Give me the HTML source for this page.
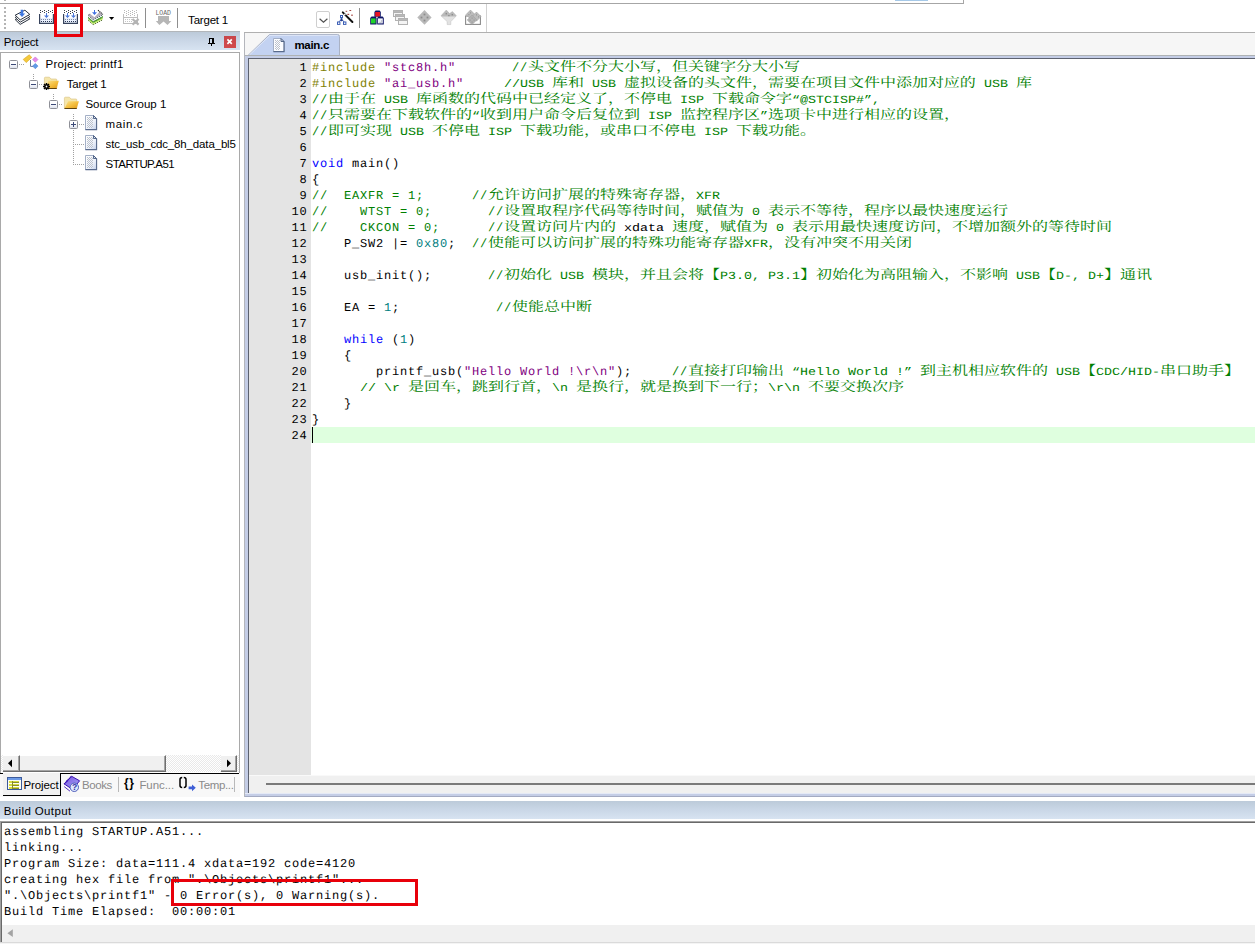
<!DOCTYPE html>
<html lang="zh-CN"><head><meta charset="utf-8"><title>printf1 - uVision</title>
<style>
html,body{margin:0;padding:0}
body{width:1255px;height:944px;overflow:hidden;background:#fff;position:relative;font-family:"Liberation Sans","Noto Sans CJK SC",sans-serif;font-size:12px;color:#000}
.a{position:absolute}
.ui{position:absolute;white-space:nowrap;font-size:11.5px;line-height:14px;color:#000}
svg{position:absolute;overflow:visible}
/* tree */
.tr{position:absolute;white-space:nowrap;font-size:11.5px;line-height:20px;height:20px}
.box{position:absolute;width:7px;height:7px;border:1px solid #8e9097;background:linear-gradient(#fff 40%,#dfe3ee);border-radius:1.5px}
.box i{position:absolute;left:1px;top:3px;width:5px;height:1px;background:#3c4a78}
.box b{position:absolute;left:3px;top:1px;width:1px;height:5px;background:#3c4a78}
.doth{position:absolute;height:1px;background-image:linear-gradient(90deg,#a0a0a0 50%,transparent 50%);background-size:2px 1px}
.dotv{position:absolute;width:1px;background-image:linear-gradient(180deg,#a0a0a0 50%,transparent 50%);background-size:1px 2px}
/* code */
.ln{position:absolute;left:249px;width:58.5px;text-align:right;height:16px;line-height:16px;font-family:"Liberation Mono",monospace;font-size:12px;letter-spacing:.8px;text-rendering:geometricPrecision;color:#000;white-space:pre}
.cl{position:absolute;left:312px;height:16px;line-height:16px;font-family:"Liberation Mono","Noto Serif CJK SC",monospace;font-size:12px;letter-spacing:.8px;text-rendering:geometricPrecision;color:#000;white-space:pre}
.cl .z{display:inline-block;font-family:"Noto Serif CJK SC","Noto Sans CJK SC",serif;font-size:13.333px;font-weight:400;line-height:10px;letter-spacing:0;transform:scaleX(1.2);transform-origin:0 0;white-space:pre}
.cl .s{display:inline-block;font-size:11px;letter-spacing:0;line-height:10px;transform:scaleX(1.2121);transform-origin:0 0;white-space:pre}
.c{color:#008000}.p{color:#808000}.k{color:#0000ff}.n{color:#008080}.q{color:#800080}
.out{position:absolute;left:4px;height:16px;line-height:16px;font-family:"Liberation Mono",monospace;font-size:12px;letter-spacing:.8px;text-rendering:geometricPrecision;color:#000;white-space:pre}
</style></head><body>
<!-- ===== top strip ===== -->
<div class="a" style="left:0;top:3px;width:964px;height:1px;background:#a6a6a6"></div>
<div class="a" style="left:963px;top:0;width:1px;height:4px;background:#a6a6a6"></div>
<div class="a" style="left:895px;top:0;width:33px;height:1px;background:#a6c9e8"></div>
<!-- ===== toolbar ===== -->
<div class="a" id="toolbar" style="left:0;top:4px;width:1255px;height:27px;background:#fff"></div>
<div class="a" style="left:486px;top:4px;width:1px;height:28px;background:#d2d2d2"></div>
<!-- gripper -->
<svg style="left:0;top:0" width="12" height="32" shape-rendering="crispEdges">
<g fill="#b4b4b4"><rect x="4" y="0" width="2" height="1"/><rect x="4" y="7" width="2" height="2"/><rect x="4" y="11" width="2" height="2"/><rect x="4" y="15" width="2" height="2"/><rect x="4" y="19" width="2" height="2"/><rect x="4" y="23" width="2" height="2"/><rect x="4" y="27" width="2" height="2"/></g>
</svg>
<!-- icon 1 : translate -->
<svg style="left:14px;top:9px" width="17" height="17" viewBox="14 9 17 17">
<g fill="#fff" stroke="#2b3340" stroke-width="1" stroke-linejoin="round">
<path d="M15.2 19.6 L20.2 24.4 L29.8 18.9 L24.9 14.5 Z"/>
<path d="M15.2 17.4 L20.2 22.2 L29.8 16.7 L24.9 12.3 Z"/>
<path d="M15.2 15.2 L20.2 19.9 L29.8 14.4 L24.9 10.2 Z"/>
</g>
<path d="M20.7 9.8 H23.2 V13.4 H25.2 L22 16.9 L18.8 13.4 H20.7 Z" fill="#3f78e0"/>
</svg>
<!-- icon 2 : build -->
<svg style="left:38px;top:9px" width="17" height="17" viewBox="38 9 17 17" shape-rendering="crispEdges">
<rect x="40" y="18" width="13" height="5" fill="#e9f0fd"/>
<g fill="#3a3f4a"><rect x="40" y="10" width="1" height="1"/><rect x="44" y="10" width="1" height="1"/><rect x="48" y="10" width="1" height="1"/><rect x="52" y="10" width="1" height="1"/>
<rect x="42" y="11" width="1" height="1"/><rect x="46" y="11" width="1" height="1"/><rect x="50" y="11" width="1" height="1"/>
<rect x="40" y="12" width="1" height="1"/><rect x="44" y="12" width="1" height="1"/><rect x="48" y="12" width="1" height="1"/><rect x="52" y="12" width="1" height="1"/></g>
<path d="M39.6 14 V23.4 H53.4 V14" fill="none" stroke="#37435c" stroke-width="1.2" shape-rendering="auto"/>
<g fill="#7e8aa6"><rect x="41" y="19" width="1" height="1"/><rect x="43" y="19" width="1" height="1"/><rect x="45" y="19" width="1" height="1"/><rect x="47" y="19" width="1" height="1"/><rect x="49" y="19" width="1" height="1"/><rect x="51" y="19" width="1" height="1"/></g>
<g fill="#2a3654"><rect x="41" y="21" width="1" height="1"/><rect x="43" y="21" width="1" height="1"/><rect x="45" y="21" width="1" height="1"/><rect x="47" y="21" width="1" height="1"/><rect x="49" y="21" width="1" height="1"/><rect x="51" y="21" width="1" height="1"/></g>
<path d="M46 13 H47 V15.4 H49 L46.5 18 L44 15.4 H46 Z" fill="#4c79d9" shape-rendering="auto"/>
</svg>
<!-- icon 3 : rebuild -->
<svg style="left:62px;top:9px" width="17" height="17" viewBox="62 9 17 17" shape-rendering="crispEdges">
<rect x="64" y="18" width="13" height="5" fill="#e9f0fd"/>
<g fill="#3a3f4a"><rect x="64" y="10" width="1" height="1"/><rect x="68" y="10" width="1" height="1"/><rect x="72" y="10" width="1" height="1"/><rect x="76" y="10" width="1" height="1"/>
<rect x="66" y="11" width="1" height="1"/><rect x="70" y="11" width="1" height="1"/><rect x="74" y="11" width="1" height="1"/>
<rect x="64" y="12" width="1" height="1"/><rect x="68" y="12" width="1" height="1"/><rect x="72" y="12" width="1" height="1"/><rect x="76" y="12" width="1" height="1"/><rect x="70" y="13" width="1" height="1"/></g>
<path d="M63.6 14 V23.4 H77.4 V14" fill="none" stroke="#37435c" stroke-width="1.2" shape-rendering="auto"/>
<g fill="#7e8aa6"><rect x="65" y="19" width="1" height="1"/><rect x="67" y="19" width="1" height="1"/><rect x="69" y="19" width="1" height="1"/><rect x="71" y="19" width="1" height="1"/><rect x="73" y="19" width="1" height="1"/><rect x="75" y="19" width="1" height="1"/></g>
<g fill="#2a3654"><rect x="65" y="21" width="1" height="1"/><rect x="67" y="21" width="1" height="1"/><rect x="69" y="21" width="1" height="1"/><rect x="71" y="21" width="1" height="1"/><rect x="73" y="21" width="1" height="1"/><rect x="75" y="21" width="1" height="1"/></g>
<path d="M67 13 H68 V15.4 H70 L67.5 18 L65 15.4 H67 Z" fill="#4c79d9" shape-rendering="auto"/>
<path d="M73 13 H74 V15.4 H76 L73.5 18 L71 15.4 H73 Z" fill="#4c79d9" shape-rendering="auto"/>
</svg>
<!-- red annotation box -->
<div class="a" style="left:54px;top:4px;width:23px;height:27px;border:3px solid #e8000a;z-index:20"></div>
<!-- icon 4 : batch build -->
<svg style="left:87px;top:9px" width="17" height="17" viewBox="87 9 17 17">
<path d="M88.2 20.32 L93.2 24.72 L102.8 19.62" fill="none" stroke="#33520f" stroke-width="1" stroke-dasharray="1.3 .9"/>
<path d="M88.2 19.50 L93.2 23.90 L102.8 18.80" fill="none" stroke="#cff07c" stroke-width="1"/>
<path d="M88.2 18.68 L93.2 23.08 L102.8 17.98" fill="none" stroke="#9fdb48" stroke-width="1"/>
<path d="M88.2 17.86 L93.2 22.26 L102.8 17.16" fill="none" stroke="#4f9e26" stroke-width="1"/>
<path d="M88.2 17.04 L93.2 21.44 L102.8 16.34" fill="none" stroke="#2c7a22" stroke-width="1"/>
<path d="M88.2 16.22 L93.2 20.62 L102.8 15.52" fill="none" stroke="#ffffff" stroke-width="1"/>
<path d="M88.2 15.40 L93.2 19.80 L102.8 14.70" fill="none" stroke="#1f4a46" stroke-width="1" stroke-dasharray="1.3 .9"/>
<path d="M88 15.2 L90.2 14 L94.5 17.3 L99.6 11.8 L102.8 14.4 L93.3 19.4 Z" fill="#b5afbd"/>
<path d="M88 15.2 L90.2 14" stroke="#7d7886" stroke-width=".9"/>
<path d="M98 10.2 L102.9 14.4" stroke="#222" stroke-width="1.1" stroke-dasharray="1.2 .7"/>
<path d="M94 10 H95 V12.2 H97 L94.5 15 L92 12.2 H94 Z" fill="#3f6fe0"/>
</svg>
<svg style="left:108px;top:16px" width="8" height="5" viewBox="108 16 8 5"><path d="M109 17 H114.2 L111.6 20 Z" fill="#000"/></svg>
<!-- icon 5 : stop build (disabled) -->
<svg style="left:122px;top:9px" width="18" height="17" viewBox="122 9 18 17" shape-rendering="crispEdges">
<g fill="#b8b8b8"><rect x="124" y="10" width="1" height="1"/><rect x="128" y="10" width="1" height="1"/><rect x="132" y="10" width="1" height="1"/><rect x="136" y="10" width="1" height="1"/>
<rect x="126" y="11" width="1" height="1"/><rect x="130" y="11" width="1" height="1"/><rect x="134" y="11" width="1" height="1"/>
<rect x="124" y="12" width="1" height="1"/><rect x="128" y="12" width="1" height="1"/><rect x="132" y="12" width="1" height="1"/><rect x="136" y="12" width="1" height="1"/>
<rect x="126" y="13" width="1" height="1"/><rect x="130" y="13" width="1" height="1"/><rect x="134" y="13" width="1" height="1"/>
<rect x="128" y="14" width="1" height="1"/><rect x="132" y="14" width="1" height="1"/>
<rect x="126" y="15" width="1" height="1"/><rect x="130" y="15" width="1" height="1"/><rect x="134" y="15" width="1" height="1"/></g>
<path d="M123 14 V24 H138 V14 H137 V17 H124 V14 Z M124 18 V23 H137 V18 Z" fill="#bdbdbd" fill-rule="evenodd"/>
<g fill="#c6c6c6"><rect x="125" y="19" width="1" height="1"/><rect x="127" y="19" width="1" height="1"/><rect x="129" y="19" width="1" height="1"/><rect x="131" y="19" width="1" height="1"/>
<rect x="125" y="21" width="1" height="1"/><rect x="127" y="21" width="1" height="1"/><rect x="129" y="21" width="1" height="1"/><rect x="131" y="21" width="1" height="1"/></g>
<path d="M132.5 19 L138.6 24.6 M138.6 19 L132.5 24.6" stroke="#b4b4b4" stroke-width="2.2" shape-rendering="auto"/>
</svg>
<div class="a" style="left:145px;top:8px;width:1px;height:20px;background:#8e8e8e"></div>
<!-- icon 6 : LOAD (disabled) -->
<svg style="left:155px;top:9px" width="18" height="17" viewBox="155 9 18 17">
<text x="155.4" y="14.8" font-family="Liberation Mono,monospace" font-size="6.8" fill="#686868" textLength="15.6" lengthAdjust="spacingAndGlyphs">LOAD</text>
<path d="M158 16 H169 V21 H171.4 L167.5 25 L163.6 21.6 L159.4 25 L155.8 21 H158 Z" fill="#b6b6b6"/>
</svg>
<div class="a" style="left:177px;top:8px;width:1px;height:20px;background:#8e8e8e"></div>
<!-- target combo -->
<div class="ui" id="tgt" style="left:188.1px;letter-spacing:-0.2px;top:13px">Target 1</div>
<div class="a" style="left:316px;top:11px;width:12px;height:15px;border:1px solid #cfcfcf;border-radius:2px;background:#fff"></div>
<svg style="left:318.5px;top:18.3px" width="9" height="6" viewBox="0 0 9 6"><path d="M0.6 0.8 L4.5 4.3 L8.4 0.8" fill="none" stroke="#505050" stroke-width="1.2"/></svg>
<!-- icon 7 : options wand -->
<svg style="left:336px;top:9px" width="18" height="17" viewBox="336 9 18 17">
<g fill="none" stroke="#3a5db4" stroke-width="1"><path d="M341.5 17.5 V20 M338.5 22 L341.5 19.6 L344.5 22"/></g>
<g fill="#fff" stroke="#3a5db4" stroke-width="1"><rect x="340.5" y="15.5" width="2" height="2.4"/><rect x="337.5" y="22" width="2.4" height="2.4"/><rect x="343.5" y="22" width="2.4" height="2.4"/></g>
<path d="M341.5 18.4 L343 20 L341.5 21.6 L340 20 Z" fill="#2a3f8c"/>
<path d="M342.8 12.4 L352.4 22" stroke="#111" stroke-width="2" stroke-linecap="round"/>
<path d="M344.2 13.8 L345.4 15" stroke="#fff" stroke-width="1.2"/>
<g fill="#a3453f"><rect x="345.6" y="10.8" width="1.6" height="1"/><rect x="349.4" y="10" width="1.8" height="1"/><rect x="347.4" y="13.8" width="1.8" height="1.2"/><rect x="351.2" y="14.6" width="1.6" height="1.2"/></g>
</svg>
<div class="a" style="left:359px;top:8px;width:1px;height:20px;background:#8e8e8e"></div>
<!-- icon 8 : manage components (cubes) -->
<svg style="left:369px;top:9px" width="17" height="17" viewBox="369 9 17 17">
<path d="M374.4 12 L375.6 10.4 H379.6 L380.8 12 V16.8 H374.4 Z" fill="#0e1466"/>
<rect x="375.2" y="12" width="4.8" height="4.6" fill="#e61224"/>
<path d="M370.2 18 L371.6 16.6 H375.6 L376.6 18 V24.4 H370.2 Z" fill="#0e1466"/>
<rect x="371" y="18.4" width="4.6" height="5" fill="#1fd32a"/>
<path d="M377.2 18 L378.4 16.6 H382.6 L383.8 18 V24.4 H377.2 Z" fill="#0e1466"/>
<rect x="378" y="18.4" width="4.8" height="5" fill="#f1f3f8"/>
<path d="M379.4 22.4 H381.6 V20" stroke="#b8bcc8" stroke-width=".9" fill="none"/>
</svg>
<!-- icon 9 : windows (disabled) -->
<svg style="left:393px;top:9px" width="17" height="17" viewBox="393 9 17 17" shape-rendering="crispEdges">
<g fill="#f4f4f4" stroke="#b2b2b2" stroke-width="1">
<rect x="393.5" y="10.5" width="9" height="6"/><rect x="393.5" y="10.5" width="9" height="1.6" fill="#b8b8b8"/>
<rect x="395.5" y="14.5" width="9" height="6"/><rect x="395.5" y="14.5" width="9" height="1.6" fill="#b8b8b8"/>
<rect x="398.5" y="18.5" width="9" height="6"/><rect x="398.5" y="18.5" width="9" height="1.6" fill="#b8b8b8"/>
</g></svg>
<!-- icon 10 : diamond (disabled) -->
<svg style="left:417px;top:9px" width="16" height="17" viewBox="417 9 16 17">
<path d="M424.5 10 L431.6 17.4 L424.5 24.8 L417.3 17.4 Z" fill="#b9b9b9"/>
<g fill="#8c8c8c"><rect x="423.6" y="13.6" width="1.8" height="1.8"/><rect x="420.6" y="16.6" width="1.8" height="1.8"/><rect x="426.6" y="16.6" width="1.8" height="1.8"/><rect x="423.6" y="19.6" width="1.8" height="1.8"/></g>
</svg>
<!-- icon 11 : funnel (disabled) -->
<svg style="left:440px;top:9px" width="18" height="17" viewBox="440 9 18 17">
<path d="M441 15.8 L446.3 10 L449.6 13.6 L452.4 11.6 L456.4 15.8 L450.8 21.6 V24.6 H447.2 V21.6 Z" fill="#e2e2e2" stroke="#c4c4c4" stroke-width=".6"/>
<path d="M441 15.8 L446.3 10 L449.6 13.6 L452.4 11.6 L456.4 15.8 L455.6 16.6 H441.8 Z" fill="#b9b9b9"/>
<g fill="#8c8c8c"><rect x="445.6" y="13" width="1.4" height="1.4"/><rect x="451.6" y="14" width="1.4" height="1.4"/><rect x="448.2" y="15" width="1.4" height="1.2"/></g>
</svg>
<!-- icon 12 : pack installer (disabled) -->
<svg style="left:464px;top:9px" width="18" height="17" viewBox="464 9 18 17">
<rect x="465.6" y="16" width="14.8" height="8.4" fill="#fff" stroke="#8a8a8a" stroke-width="1.1"/>
<path d="M470.5 10 L475 14.6 L470.5 19.2 L466 14.6 Z" fill="#bcbcbc" stroke="#9a9a9a" stroke-width=".5"/>
<path d="M476.5 12 L481 16.6 L476.5 21.2 L472 16.6 Z" fill="#bcbcbc" stroke="#9a9a9a" stroke-width=".5"/>
<path d="M472 15.2 L476.8 20 L472 24.6 L467.2 20 Z" fill="#b4b4b4" stroke="#969696" stroke-width=".5"/>
<g fill="#8f8f8f"><rect x="470" y="12.4" width="1" height="1"/><rect x="468.4" y="14.2" width="1" height="1"/><rect x="476" y="14.4" width="1" height="1"/><rect x="478" y="16.4" width="1" height="1"/><rect x="471.6" y="17.6" width="1" height="1"/><rect x="469.6" y="19.6" width="1" height="1"/><rect x="473.6" y="19.6" width="1" height="1"/><rect x="471.6" y="21.6" width="1" height="1"/></g>
</svg>
<!-- ===== project panel ===== -->
<div class="a" style="left:0;top:31px;width:240px;height:19px;background:linear-gradient(#bccad9,#c9d6e6 45%,#d7e3f1);border-top:1px solid #b2b6ba;box-sizing:border-box"></div>
<div class="ui" id="ph" style="left:3.8px;letter-spacing:-0.18px;top:35px">Project</div>
<!-- pin -->
<svg style="left:207px;top:37px" width="10" height="10" viewBox="207 37 10 10" shape-rendering="crispEdges">
<path d="M209 38 H214 V43 H215 V44 H212 V46 H211 V44 H208 V43 H209 Z M210 39 V43 H212 V39 Z" fill="#000" fill-rule="evenodd"/>
</svg>
<div class="a" style="left:224px;top:36px;width:12px;height:12px;background:linear-gradient(#c8464a,#d24a4c)"></div>
<svg style="left:226px;top:38px" width="8" height="8" viewBox="226 38 8 8"><path d="M227.4 39.4 L231.8 43.8 M231.8 39.4 L227.4 43.8" stroke="#fff" stroke-width="1.7"/></svg>
<!-- tree frame -->
<div class="a" style="left:0;top:52px;width:239px;height:721px;border:1px solid #a9a9a9;border-bottom:none;background:#fff;box-sizing:content-box;width:238px"></div>
<!-- tree lines -->
<div class="doth" style="left:19px;top:64px;width:6px"></div>
<div class="dotv" style="left:33px;top:74px;height:6px"></div>
<div class="doth" style="left:39px;top:84px;width:4px"></div>
<div class="dotv" style="left:53px;top:94px;height:6px"></div>
<div class="doth" style="left:59px;top:104px;width:4px"></div>
<div class="dotv" style="left:73px;top:114px;height:51px"></div>
<div class="doth" style="left:79px;top:124px;width:6px"></div>
<div class="doth" style="left:73px;top:144px;width:12px"></div>
<div class="doth" style="left:73px;top:164px;width:12px"></div>
<!-- expanders -->
<div class="box" style="left:9px;top:60px"><i></i></div>
<div class="box" style="left:29px;top:80px"><i></i></div>
<div class="box" style="left:49px;top:100px"><i></i></div>
<div class="box" style="left:69px;top:120px"><i></i><b></b></div>
<!-- project icon -->
<svg style="left:23px;top:54px" width="16" height="16" viewBox="23 54 16 16">
<path d="M30.5 60 V66.4 H33.4" fill="none" stroke="#6a7c9c" stroke-width="1"/>
<path d="M23.2 59.4 L29.2 54.8 L31.8 57.4 L26.2 62.6 Z" fill="#f4c93c" stroke="#d9a51c" stroke-width=".6"/>
<path d="M35.3 56.9 L38 59.6 L35.3 62.3 L32.6 59.6 Z" fill="#e58be8" stroke="#c860cf" stroke-width=".5"/>
<path d="M35.3 63.4 L38 66.1 L35.3 68.8 L32.6 66.1 Z" fill="#5f9be8" stroke="#3c74c8" stroke-width=".5"/>
</svg>
<!-- folder icons -->
<svg style="left:43px;top:76px" width="17" height="15" viewBox="43 76 17 15">
<defs><linearGradient id="fo1" x1="0" y1="0" x2="1" y2="1"><stop offset="0" stop-color="#fbe48e"/><stop offset=".55" stop-color="#f4bd3c"/><stop offset="1" stop-color="#e09a1c"/></linearGradient></defs>
<path d="M44.4 88 V78.2 Q44.4 77.2 45.4 77.2 H49.4 L51 79 H56 Q56.8 79 56.8 80 V88 Z" fill="#f5e6ac" stroke="#d6c07c" stroke-width=".6"/>
<path d="M48.4 80.8 H58.8 L56.6 88.4 H46 Z" fill="url(#fo1)"/>
<path d="M45.6 88.5 H56.8" stroke="#5c420f" stroke-width="1"/>
<g stroke="#000" stroke-width="1.5"><path d="M46.5 83 V90 M43 86.5 H50 M44 84 L49 89 M49 84 L44 89"/></g>
<circle cx="46.5" cy="86.5" r="1.9" fill="#000"/><circle cx="46.5" cy="86.5" r=".9" fill="#fff"/>
</svg>
<svg style="left:63px;top:96px" width="17" height="15" viewBox="43 76 17 15">
<defs><linearGradient id="fo2" x1="0" y1="0" x2="1" y2="1"><stop offset="0" stop-color="#fbe48e"/><stop offset=".55" stop-color="#f4bd3c"/><stop offset="1" stop-color="#e09a1c"/></linearGradient></defs>
<path d="M44.4 88 V78.2 Q44.4 77.2 45.4 77.2 H49.4 L51 79 H56 Q56.8 79 56.8 80 V88 Z" fill="#f5e6ac" stroke="#d6c07c" stroke-width=".6"/>
<path d="M48.2 81.2 H58.9 L56.7 88.4 H44.6 Z" fill="url(#fo2)"/>
<path d="M44.4 88.5 H56.8" stroke="#5c420f" stroke-width="1"/>
</svg>
<!-- file icons -->
<svg style="left:85px;top:115px" width="13" height="16" viewBox="0 0 13 16">
<defs><pattern id="dp0" width="2" height="2" patternUnits="userSpaceOnUse"><rect x="0" y="0" width="1" height="1" fill="#bcc2cc"/><rect x="1" y="1" width="1" height="1" fill="#bcc2cc"/></pattern>
<linearGradient id="fg0" x1="0" y1="0" x2="1" y2="1"><stop offset="0" stop-color="#ffffff"/><stop offset=".6" stop-color="#eef2fa"/><stop offset="1" stop-color="#c3d0ea"/></linearGradient></defs>
<path d="M0.5 0.5 H8.5 L11.5 3.5 V14.5 H0.5 Z" fill="url(#fg0)" stroke="#a3afc6" stroke-width="1"/>
<path d="M0.4 14.6 H11.6 V3.6" fill="none" stroke="#586a8c" stroke-width="1.1"/>
<path d="M8.5 0.5 V3.5 H11.5 Z" fill="#dfe6f3" stroke="#44587c" stroke-width=".9"/>
<rect x="2" y="2" width="6" height="11" fill="url(#dp0)"/>
</svg>
<svg style="left:85px;top:135px" width="13" height="16" viewBox="0 0 13 16">
<defs><pattern id="dp1" width="2" height="2" patternUnits="userSpaceOnUse"><rect x="0" y="0" width="1" height="1" fill="#bcc2cc"/><rect x="1" y="1" width="1" height="1" fill="#bcc2cc"/></pattern>
<linearGradient id="fg1" x1="0" y1="0" x2="1" y2="1"><stop offset="0" stop-color="#ffffff"/><stop offset=".6" stop-color="#eef2fa"/><stop offset="1" stop-color="#c3d0ea"/></linearGradient></defs>
<path d="M0.5 0.5 H8.5 L11.5 3.5 V14.5 H0.5 Z" fill="url(#fg1)" stroke="#a3afc6" stroke-width="1"/>
<path d="M0.4 14.6 H11.6 V3.6" fill="none" stroke="#586a8c" stroke-width="1.1"/>
<path d="M8.5 0.5 V3.5 H11.5 Z" fill="#dfe6f3" stroke="#44587c" stroke-width=".9"/>
<rect x="2" y="2" width="6" height="11" fill="url(#dp1)"/>
</svg>
<svg style="left:85px;top:155px" width="13" height="16" viewBox="0 0 13 16">
<defs><pattern id="dp2" width="2" height="2" patternUnits="userSpaceOnUse"><rect x="0" y="0" width="1" height="1" fill="#bcc2cc"/><rect x="1" y="1" width="1" height="1" fill="#bcc2cc"/></pattern>
<linearGradient id="fg2" x1="0" y1="0" x2="1" y2="1"><stop offset="0" stop-color="#ffffff"/><stop offset=".6" stop-color="#eef2fa"/><stop offset="1" stop-color="#c3d0ea"/></linearGradient></defs>
<path d="M0.5 0.5 H8.5 L11.5 3.5 V14.5 H0.5 Z" fill="url(#fg2)" stroke="#a3afc6" stroke-width="1"/>
<path d="M0.4 14.6 H11.6 V3.6" fill="none" stroke="#586a8c" stroke-width="1.1"/>
<path d="M8.5 0.5 V3.5 H11.5 Z" fill="#dfe6f3" stroke="#44587c" stroke-width=".9"/>
<rect x="2" y="2" width="6" height="11" fill="url(#dp2)"/>
</svg>
<!-- tree labels -->
<div class="tr" id="trA" style="left:45.6px;letter-spacing:0.24px;top:54px">Project: printf1</div>
<div class="tr" id="trB" style="left:66.8px;letter-spacing:-0.26px;top:74px">Target 1</div>
<div class="tr" id="trC" style="left:85.4px;letter-spacing:-0.02px;top:94px">Source Group 1</div>
<div class="tr" id="trD" style="left:105.6px;letter-spacing:0.6px;top:114px">main.c</div>
<div class="tr" id="trE" style="left:105.6px;letter-spacing:-0.15px;top:134px;width:130.3px;overflow:hidden">stc_usb_cdc_8h_data_bl5</div>
<div class="tr" id="trF" style="left:105.6px;letter-spacing:-0.57px;top:154px">STARTUP.A51</div>
<!-- project h-scrollbar -->
<div class="a" style="left:1px;top:755px;width:238px;height:17px;background-color:#fff;background-image:linear-gradient(45deg,#e9e9e9 25%,transparent 25%,transparent 75%,#e9e9e9 75%),linear-gradient(45deg,#e9e9e9 25%,transparent 25%,transparent 75%,#e9e9e9 75%);background-size:2px 2px;background-position:0 0,1px 1px"></div>
<div class="a" style="left:3px;top:755px;width:15px;height:15px;background:#f0f0f0;border-right:1px solid #6e6e6e;border-bottom:1px solid #6e6e6e;border-top:1px solid #fff;box-shadow:inset -1px -1px 0 #a4a4a4;padding:0 1px 1px 0;box-sizing:content-box;height:14px"></div>
<svg style="left:7px;top:759px" width="6" height="9" viewBox="0 0 6 9"><path d="M5 0.4 V8.2 L1 4.3 Z" fill="#000"/></svg>
<div class="a" style="left:20px;top:755px;width:144px;height:14px;background:#f0f0f0;border-right:1px solid #6e6e6e;border-bottom:1px solid #6e6e6e;border-top:1px solid #fff;box-shadow:inset -1px -1px 0 #a4a4a4;padding:0 1px 1px 0"></div>
<div class="a" style="left:221px;top:755px;width:14px;height:14px;background:#f0f0f0;border-right:1px solid #6e6e6e;border-bottom:1px solid #6e6e6e;border-top:1px solid #fff;box-shadow:inset -1px -1px 0 #a4a4a4;padding:0 1px 1px 0"></div>
<svg style="left:226px;top:759px" width="6" height="9" viewBox="0 0 6 9"><path d="M1 0.4 V8.2 L5 4.3 Z" fill="#000"/></svg>
<!-- bottom tabs -->
<div class="a" style="left:0;top:773px;width:240px;height:24px;background:#f8f8f8"></div>
<div class="a" style="left:3px;top:773px;width:58px;height:22px;background:#f1f1f1;border-right:1px solid #000;border-bottom:1px solid #000;box-sizing:content-box;width:57px"></div>
<div class="a" style="left:0;top:773px;width:3px;height:1px;background:#000"></div>
<div class="a" style="left:60px;top:773px;width:179px;height:1px;background:#000"></div>
<!-- tab: Project -->
<svg style="left:7px;top:777px" width="15" height="13" viewBox="0 0 15 13" shape-rendering="crispEdges">
<rect x="0.5" y="0.5" width="14" height="12" fill="#fdfdf2" stroke="#3c5a9a"/>
<rect x="1" y="1" width="13" height="2" fill="#6c9ae6"/>
<g fill="#d8dc3c"><rect x="2" y="4" width="3" height="2"/><rect x="2" y="7" width="3" height="2"/><rect x="2" y="10" width="3" height="2"/><rect x="6" y="4" width="6" height="2"/><rect x="6" y="7" width="6" height="2"/><rect x="6" y="10" width="6" height="2"/></g>
<g fill="#8a8e2a"><rect x="5" y="4" width="1" height="8"/><rect x="6" y="5" width="6" height="1"/><rect x="6" y="8" width="6" height="1"/><rect x="6" y="11" width="6" height="1"/></g>
</svg>
<div class="ui" id="tabP" style="left:23.5px;letter-spacing:-0.12px;top:778px">Project</div>
<!-- tab: Books -->
<svg style="left:63px;top:775px" width="18" height="18" viewBox="63 775 18 18">
<defs><linearGradient id="bk" x1="0" y1="0" x2="1" y2="1"><stop offset="0" stop-color="#7a55e2"/><stop offset="1" stop-color="#a3a6f2"/></linearGradient></defs>
<path d="M64.2 784 L71.5 776.2 L79.6 780.8 L72.6 789.4 Z" fill="url(#bk)" stroke="#3d14b4" stroke-width="1"/>
<path d="M64.2 784 L71.5 776.2" stroke="#3d14b4" stroke-width="1.6" stroke-dasharray="1 .8"/>
<path d="M64.4 785.6 L70.4 790.4" stroke="#fff" stroke-width="1.2"/>
<path d="M64.2 786.6 L70 791.2" stroke="#3d14b4" stroke-width=".9"/>
<circle cx="74.3" cy="787.3" r="4.2" fill="#dde9fd" stroke="#4350b4" stroke-width=".9"/>
<text x="72.1" y="790.4" font-family="Liberation Sans,sans-serif" font-weight="bold" font-size="8.5" fill="#3636a6">?</text>
</svg>
<div class="ui" id="tabB" style="left:81.9px;letter-spacing:-0.38px;top:778px;color:#8a8a8a">Books</div>
<div class="a" style="left:118px;top:777px;width:1px;height:15px;background:#b9b9b9"></div>
<!-- tab: Functions -->
<div class="ui" style="left:124px;top:776px;font-weight:bold;font-size:12px;letter-spacing:0.5px">{}</div>
<div class="ui" id="tabF" style="left:139.4px;letter-spacing:-0.07px;top:778px;color:#8a8a8a">Func...</div>
<!-- tab: Templates -->
<svg style="left:179px;top:777px" width="16" height="14" viewBox="0 0 16 14">
<path d="M3.2 0.6 Q1 0.6 1 2.6 V8.4 Q1 10.4 3.2 10.4 M4.8 0.6 Q7 0.6 7 2.6 V8.4 Q7 10.4 4.8 10.4" fill="none" stroke="#000" stroke-width="1.5"/>
<path d="M9.6 9.4 H13 V7.4 L16.8 10.8 L13 14.2 V12.2 H9.6 Z" fill="#3f5fd6"/>
</svg>
<div class="ui" id="tabT" style="left:198.3px;letter-spacing:-0.35px;top:778px;color:#8a8a8a">Temp...</div>
<div class="a" style="left:234px;top:777px;width:1px;height:15px;background:#b9b9b9"></div>
<!-- ===== editor frame ===== -->
<div class="a" style="left:244px;top:32px;width:1011px;height:1px;background:#b0b0b0"></div>
<div class="a" style="left:244px;top:33px;width:1px;height:764px;background:#b4b6bc"></div>
<div class="a" style="left:245px;top:33px;width:1010px;height:22px;background:#f6f6f6"></div>
<!-- tab -->
<svg style="left:245px;top:33px" width="100" height="23" viewBox="245 33 100 23">
<path d="M248 55.5 L269.5 34.5 H337.5 Q339.5 34.5 339.5 36.5 V55.5 Z" fill="#c3d2f1" stroke="#aab2c4" stroke-width="1"/>
<path d="M249.4 55 L270 35.4 H337.6" fill="none" stroke="#dfe7f8" stroke-width="1"/>
</svg>
<svg style="left:273px;top:38px" width="13" height="15" viewBox="0 0 13 15">
<defs><pattern id="dpt" width="2" height="2" patternUnits="userSpaceOnUse"><rect x="0" y="0" width="1" height="1" fill="#bcc2cc"/><rect x="1" y="1" width="1" height="1" fill="#bcc2cc"/></pattern></defs>
<path d="M0.5 0.5 H8 L11 3.5 V13.5 H0.5 Z" fill="#fbfcff" stroke="#a3afc6" stroke-width="1"/>
<path d="M0.4 13.6 H11.1 V3.6" fill="none" stroke="#586a8c" stroke-width="1.1"/>
<path d="M8 0.5 V3.5 H11 Z" fill="#dfe6f3" stroke="#44587c" stroke-width=".9"/>
<rect x="2" y="2" width="5" height="10" fill="url(#dpt)"/>
</svg>
<div class="ui" id="tabm" style="left:294.4px;letter-spacing:-0.3px;top:38px;font-weight:bold">main.c</div>
<!-- frame bands -->
<div class="a" style="left:245px;top:55px;width:1010px;height:1px;background:#aeb2b4"></div>
<div class="a" style="left:245px;top:56px;width:1010px;height:741px;background:#c4cde6"></div>
<div class="a" style="left:248px;top:58px;width:1007px;height:735px;background:#5d6270"></div>
<div class="a" style="left:249px;top:59px;width:1006px;height:734px;background:#fff"></div>
<div class="a" style="left:245px;top:793px;width:1010px;height:1px;background:#e4e9f6"></div>
<div class="a" style="left:245px;top:796px;width:1010px;height:1px;background:#a3aac2"></div>
<!-- margin -->
<div class="a" style="left:249px;top:59px;width:62px;height:716px;background:#e4e4e4"></div>
<!-- current line -->
<div class="a" style="left:311px;top:427px;width:944px;height:16px;background:#dfffdf"></div>
<div class="a" style="left:312px;top:427px;width:1px;height:16px;background:#000"></div>
<!-- h scrollbar -->
<div class="a" style="left:249px;top:775px;width:1006px;height:1px;background:#f9f9f9"></div><div class="a" style="left:249px;top:776px;width:1006px;height:17px;background:#f0f0f0"></div>
<div class="a" style="left:266px;top:783px;width:989px;height:2px;background:#7a7a7a"></div>
<!-- ===== code ===== -->
<div class="ln" style="top:60px">1</div><div class="cl" style="top:60px"><span class="p">#include </span><span class="q">"stc8h.h"</span>       <span class="c">//<span class="z" style="width:272px">头文件不分大小写，但关键字分大小写</span></span></div>
<div class="ln" style="top:76px">2</div><div class="cl" style="top:76px"><span class="p">#include </span><span class="q">"ai_usb.h"</span>     <span class="c"><span class="s" style="width:48px">//USB </span><span class="z" style="width:32px">库和</span><span class="s" style="width:40px"> USB </span><span class="z" style="width:352px">虚拟设备的头文件，需要在项目文件中添加对应的</span><span class="s" style="width:40px"> USB </span><span class="z" style="width:16px">库</span></span></div>
<div class="ln" style="top:92px">3</div><div class="cl" style="top:92px"><span class="c">//<span class="z" style="width:48px">由于在</span><span class="s" style="width:40px"> USB </span><span class="z" style="width:256px">库函数的代码中已经定义了，不停电</span><span class="s" style="width:40px"> ISP </span><span class="z" style="width:80px">下载命令字</span><span class="s" style="width:88px">“@STCISP#”,</span></span></div>
<div class="ln" style="top:108px">4</div><div class="cl" style="top:108px"><span class="c">//<span class="z" style="width:144px">只需要在下载软件的</span><span class="s" style="width:8px">“</span><span class="z" style="width:160px">收到用户命令后复位到</span><span class="s" style="width:40px"> ISP </span><span class="z" style="width:80px">监控程序区</span><span class="s" style="width:8px">”</span><span class="z" style="width:192px">选项卡中进行相应的设置，</span></span></div>
<div class="ln" style="top:124px">5</div><div class="cl" style="top:124px"><span class="c">//<span class="z" style="width:64px">即可实现</span><span class="s" style="width:40px"> USB </span><span class="z" style="width:48px">不停电</span><span class="s" style="width:40px"> ISP </span><span class="z" style="width:176px">下载功能，或串口不停电</span><span class="s" style="width:40px"> ISP </span><span class="z" style="width:80px">下载功能。</span></span></div>
<div class="ln" style="top:140px">6</div><div class="cl" style="top:140px"></div>
<div class="ln" style="top:156px">7</div><div class="cl" style="top:156px"><span class="k">void</span> main()</div>
<div class="ln" style="top:172px">8</div><div class="cl" style="top:172px">{</div>
<div class="ln" style="top:188px">9</div><div class="cl" style="top:188px"><span class="c">//  EAXFR = 1;      //<span class="z" style="width:208px">允许访问扩展的特殊寄存器，</span><span class="s" style="width:24px">XFR</span></span></div>
<div class="ln" style="top:204px">10</div><div class="cl" style="top:204px"><span class="c">//    WTST = 0;       //<span class="z" style="width:240px">设置取程序代码等待时间，赋值为</span><span class="s" style="width:24px"> 0 </span><span class="z" style="width:240px">表示不等待，程序以最快速度运行</span></span></div>
<div class="ln" style="top:220px">11</div><div class="cl" style="top:220px"><span class="c">//    CKCON = 0;      //<span class="z" style="width:112px">设置访问片内的</span><span class="s" style="width:56px"> <b style="color:#000;font-weight:normal">xdata</b> </span><span class="z" style="width:96px">速度，赋值为</span><span class="s" style="width:24px"> 0 </span><span class="z" style="width:320px">表示用最快速度访问，不增加额外的等待时间</span></span></div>
<div class="ln" style="top:236px">12</div><div class="cl" style="top:236px">    P_SW2 |= <span class="n">0x80</span>;  <span class="c">//<span class="z" style="width:256px">使能可以访问扩展的特殊功能寄存器</span><span class="s" style="width:24px">XFR</span><span class="z" style="width:144px">，没有冲突不用关闭</span></span></div>
<div class="ln" style="top:252px">13</div><div class="cl" style="top:252px"></div>
<div class="ln" style="top:268px">14</div><div class="cl" style="top:268px">    usb_init();       <span class="c">//<span class="z" style="width:48px">初始化</span><span class="s" style="width:40px"> USB </span><span class="z" style="width:128px">模块，并且会将【</span><span class="s" style="width:80px">P3.0, P3.1</span><span class="z" style="width:208px">】初始化为高阻输入，不影响</span><span class="s" style="width:32px"> USB</span><span class="z" style="width:16px">【</span><span class="s" style="width:48px">D-, D+</span><span class="z" style="width:48px">】通讯</span></span></div>
<div class="ln" style="top:284px">15</div><div class="cl" style="top:284px"></div>
<div class="ln" style="top:300px">16</div><div class="cl" style="top:300px">    EA = <span class="n">1</span>;            <span class="c">//<span class="z" style="width:80px">使能总中断</span></span></div>
<div class="ln" style="top:316px">17</div><div class="cl" style="top:316px"></div>
<div class="ln" style="top:332px">18</div><div class="cl" style="top:332px">    <span class="k">while</span> (<span class="n">1</span>)</div>
<div class="ln" style="top:348px">19</div><div class="cl" style="top:348px">    {</div>
<div class="ln" style="top:364px">20</div><div class="cl" style="top:364px">        printf_usb(<span class="q">"Hello World !\r\n"</span>);     <span class="c">//<span class="z" style="width:96px">直接打印输出</span><span class="s" style="width:136px"> “Hello World !” </span><span class="z" style="width:128px">到主机相应软件的</span><span class="s" style="width:32px"> USB</span><span class="z" style="width:16px">【</span><span class="s" style="width:64px">CDC/HID-</span><span class="z" style="width:80px">串口助手】</span></span></div>
<div class="ln" style="top:380px">21</div><div class="cl" style="top:380px">      <span class="c"><span class="s" style="width:48px">// \r </span><span class="z" style="width:144px">是回车，跳到行首，</span><span class="s" style="width:24px">\n </span><span class="z" style="width:192px">是换行，就是换到下一行；</span><span class="s" style="width:40px">\r\n </span><span class="z" style="width:96px">不要交换次序</span></span></div>
<div class="ln" style="top:396px">22</div><div class="cl" style="top:396px">    }</div>
<div class="ln" style="top:412px">23</div><div class="cl" style="top:412px">}</div>
<div class="ln" style="top:428px">24</div><div class="cl" style="top:428px"></div>
<!-- ===== build output ===== -->
<div class="a" style="left:0;top:801px;width:1255px;height:18px;background:linear-gradient(#bccad9,#c9d6e6 45%,#d7e3f1)"></div>
<div class="ui" id="bo" style="left:3.8px;letter-spacing:0.37px;top:804px">Build Output</div>
<div class="a" style="left:0;top:821px;width:1255px;height:122px;background:#a0a0a0"></div>
<div class="a" style="left:1px;top:822px;width:1254px;height:120px;background:#696969"></div>
<div class="a" style="left:2px;top:823px;width:1253px;height:119px;background:#fff"></div>
<div class="out" style="top:824px">assembling STARTUP.A51...</div>
<div class="out" style="top:840px">linking...</div>
<div class="out" style="top:856px">Program Size: data=111.4 xdata=192 code=4120</div>
<div class="out" style="top:872px">creating hex file from ".\Objects\printf1"...</div>
<div class="out" style="top:888px">".\Objects\printf1" - 0 Error(s), 0 Warning(s).</div>
<div class="out" style="top:904px">Build Time Elapsed:  00:00:01</div>
<div class="a" style="left:171px;top:879px;width:241px;height:21px;border:3px solid #e8000a"></div>
<div class="a" style="left:2px;top:925px;width:1253px;height:17px;background:#f0f0f0"></div>
<svg style="left:7px;top:929px" width="7" height="9" viewBox="0 0 7 9"><path d="M5.8 0.3 V8 L0.4 4.15 Z" fill="#a3a3a3"/></svg>
<div class="a" style="left:0;top:942px;width:1255px;height:1px;background:#dadada"></div>
<div class="a" style="left:0;top:943px;width:1255px;height:1px;background:#f4f4f4"></div>
</body></html>
